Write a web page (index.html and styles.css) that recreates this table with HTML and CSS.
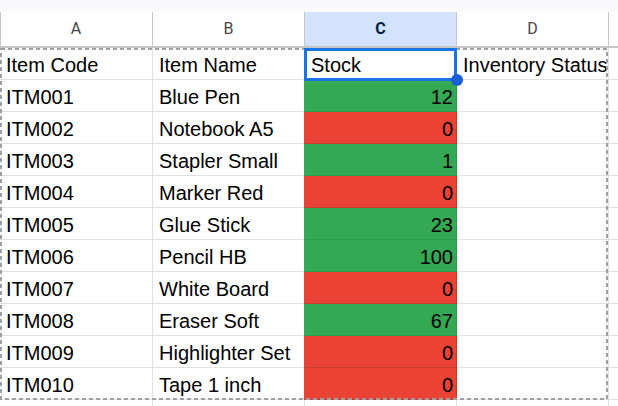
FILE: index.html
```html
<!DOCTYPE html>
<html>
<head>
<meta charset="utf-8">
<link rel="stylesheet" href="styles.css">
</head>
<body>
<div class="topbar"></div>
<div class="sheet">
  <div class="hd first">A</div>
  <div class="hd">B</div>
  <div class="hd sel">C</div>
  <div class="hd">D</div>
  <div class="hd end"></div>

  <div class="c">Item Code</div><div class="c">Item Name</div><div class="c">Stock</div><div class="c">Inventory Status</div><div class="c end"></div>
  <div class="c">ITM001</div><div class="c">Blue Pen</div><div class="c num g">12</div><div class="c"></div><div class="c end"></div>
  <div class="c">ITM002</div><div class="c">Notebook A5</div><div class="c num r">0</div><div class="c"></div><div class="c end"></div>
  <div class="c">ITM003</div><div class="c">Stapler Small</div><div class="c num g">1</div><div class="c"></div><div class="c end"></div>
  <div class="c">ITM004</div><div class="c">Marker Red</div><div class="c num r">0</div><div class="c"></div><div class="c end"></div>
  <div class="c">ITM005</div><div class="c">Glue Stick</div><div class="c num g">23</div><div class="c"></div><div class="c end"></div>
  <div class="c">ITM006</div><div class="c">Pencil HB</div><div class="c num g">100</div><div class="c"></div><div class="c end"></div>
  <div class="c">ITM007</div><div class="c">White Board</div><div class="c num r">0</div><div class="c"></div><div class="c end"></div>
  <div class="c">ITM008</div><div class="c">Eraser Soft</div><div class="c num g">67</div><div class="c"></div><div class="c end"></div>
  <div class="c">ITM009</div><div class="c">Highlighter Set</div><div class="c num r">0</div><div class="c"></div><div class="c end"></div>
  <div class="c">ITM010</div><div class="c">Tape 1 inch</div><div class="c num r">0</div><div class="c"></div><div class="c end"></div>
  <div class="c"></div><div class="c"></div><div class="c"></div><div class="c"></div><div class="c end"></div>

  <svg class="copy-range" width="608" height="352" viewBox="0 0 608 352">
    <rect x="1" y="1" width="606" height="350" fill="none" stroke="#9aa0a6" stroke-width="2" stroke-dasharray="4 3"/>
  </svg>
  <div class="selection"></div>
  <div class="handle"></div>
</div>
</body>
</html>
```

FILE: styles.css
```css
html, body {
  margin: 0;
  padding: 0;
  background: #ffffff;
  overflow: hidden;
}

body {
  width: 618px;
  height: 406px;
  font-family: "Liberation Sans", Arial, sans-serif;
}

.topbar {
  height: 12px;
  background: #f8fafd;
}

.sheet {
  position: relative;
  display: grid;
  grid-template-columns: 153px 152px 152px 152px 1fr;
  grid-template-rows: 36px;
  grid-auto-rows: 32px;
  height: 394px;
  overflow: hidden;
}

.hd {
  box-sizing: border-box;
  border-right: 1px solid #c4c7c5;
  border-bottom: 2px solid #c4c7c5;
  background: #ffffff;
  display: flex;
  align-items: center;
  justify-content: center;
  font-family: Roboto, "Liberation Sans", sans-serif;
  font-size: 16px;
  color: #444746;
  padding-bottom: 1px;
}

.hd.first {
  box-shadow: inset 1px 0 0 #c4c7c5;
}

.hd.sel {
  background: #d3e3fd;
  color: #041e49;
  font-weight: 700;
}

.hd.end {
  border-right: none;
}

.c {
  box-sizing: border-box;
  border-right: 1px solid #e1e1e1;
  border-bottom: 1px solid #e1e1e1;
  display: flex;
  align-items: flex-end;
  padding: 0 2px 2px 6px;
  font-size: 20px;
  line-height: 23px;
  color: #000000;
  white-space: nowrap;
  overflow: hidden;
}

.c.end {
  border-right: none;
}

.c.num {
  justify-content: flex-end;
  padding-right: 3px;
}

.c.g {
  background: #34a853;
  border-bottom-color: #2e9a4b;
  border-right-color: #2e9a4b;
  box-shadow: -1px 0 0 #34a853;
}

.c.r {
  background: #ea4335;
  border-bottom-color: #c9392e;
  border-right-color: #c9392e;
  box-shadow: -1px 0 0 #ea4335;
}

.copy-range {
  position: absolute;
  left: 0;
  top: 36px;
  pointer-events: none;
}

.selection {
  position: absolute;
  left: 304px;
  top: 36px;
  width: 153px;
  height: 33px;
  box-sizing: border-box;
  border: 3px solid #1a73e8;
  pointer-events: none;
}

.handle {
  position: absolute;
  left: 451px;
  top: 62px;
  width: 12px;
  height: 12px;
  border-radius: 50%;
  background: #1a5fd6;
}
```
